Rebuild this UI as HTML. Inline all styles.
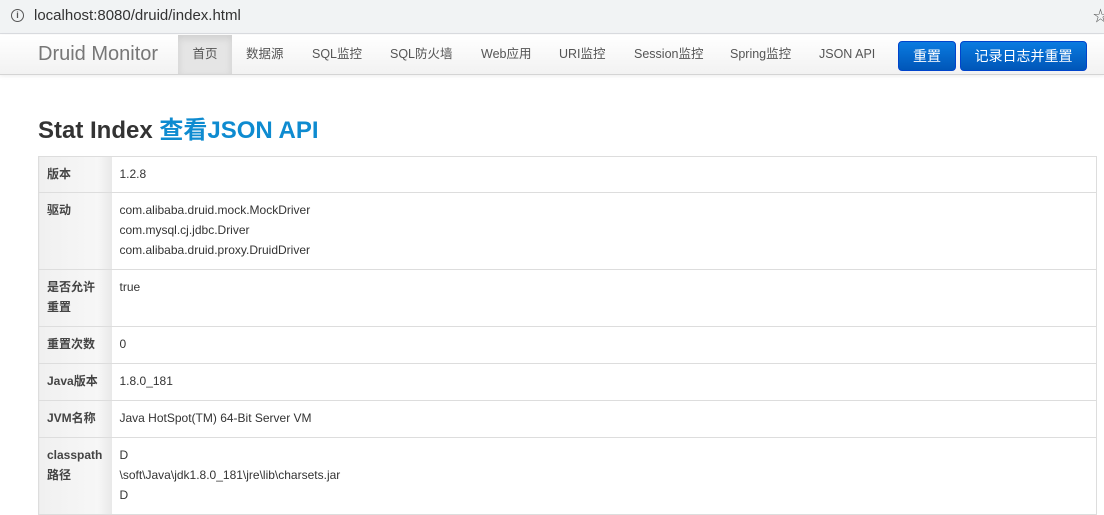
<!DOCTYPE html>
<html><head><meta charset="utf-8"><style>
*{margin:0;padding:0;box-sizing:border-box}
body{width:1104px;height:497px;overflow:hidden;background:#fff;font-family:"Liberation Sans","Noto Sans CJK SC",sans-serif;font-size:12px;color:#333}
.addr{height:34px;background:#f1f3f4;border-bottom:1px solid #dadce0;position:relative}
.addr .i{position:absolute;left:11px;top:9px;width:13px;height:13px;border:1.3px solid #555;border-radius:50%;font-size:9px;line-height:11px;text-align:center;color:#555;font-weight:bold}
.addr .u{position:absolute;left:34px;top:7px;font-size:15px;color:#333}
.addr .s{position:absolute;left:1093px;top:5px;font-size:15px;color:#555}
.nav{position:absolute;top:35px;left:0;width:1104px;height:40px;background:linear-gradient(#fff,#f2f2f2);border-bottom:1px solid #d4d4d4;box-shadow:0 1px 4px rgba(0,0,0,.08)}
.brand{position:absolute;left:38px;top:8px;font-size:20px;color:#777}
.nav a{position:absolute;top:0;height:39px;line-height:39px;font-size:12.5px;color:#555}
.act{background:#e5e5e5;box-shadow:inset 0 3px 8px rgba(0,0,0,.1)}
.btn{position:absolute;top:6px;height:30px;line-height:29px;text-align:center;color:#fff;font-size:14px;background:linear-gradient(#0a7be0,#0056b8);border:1px solid #04c;border-radius:4px}
h1{position:absolute;left:38px;top:110px;font-size:24px;font-weight:bold;color:#333}
h1 span{color:#0e8bd0}
table{position:absolute;left:38px;top:156px;width:1059px;border-collapse:collapse;border:1px solid #ddd}
td{border-top:1px solid #ddd;padding:7px 8px 9px;vertical-align:top;line-height:20px;font-size:12px}
td.l{width:73px;background:linear-gradient(90deg,#f0f0f0,#f7f7f7 80%,#e8e8e8);font-weight:bold;color:#444}
</style></head><body>
<div class="addr"><div class="i">i</div><div class="u">localhost:8080/druid/index.html</div><div class="s">☆</div></div>
<div class="nav">
<div class="brand">Druid Monitor</div>
<a class="act" style="left:178px;width:54px;text-align:center">首页</a>
<a style="left:246px">数据源</a>
<a style="left:312px">SQL监控</a>
<a style="left:390px">SQL防火墙</a>
<a style="left:481px">Web应用</a>
<a style="left:559px">URI监控</a>
<a style="left:634px">Session监控</a>
<a style="left:730px">Spring监控</a>
<a style="left:819px">JSON API</a>
<div class="btn" style="left:898px;width:58px">重置</div>
<div class="btn" style="left:960px;width:127px">记录日志并重置</div>
</div>
<h1>Stat Index <span>查看JSON API</span></h1>
<table>
<tr><td class="l" style="padding-bottom:8px">版本</td><td style="padding-bottom:8px">1.2.8</td></tr>
<tr><td class="l">驱动</td><td>com.alibaba.druid.mock.MockDriver<br>com.mysql.cj.jdbc.Driver<br>com.alibaba.druid.proxy.DruidDriver</td></tr>
<tr><td class="l" style="height:57px">是否允许<br>重置</td><td>true</td></tr>
<tr><td class="l">重置次数</td><td>0</td></tr>
<tr><td class="l">Java版本</td><td>1.8.0_181</td></tr>
<tr><td class="l">JVM名称</td><td>Java HotSpot(TM) 64-Bit Server VM</td></tr>
<tr><td class="l">classpath<br>路径</td><td>D<br>\soft\Java\jdk1.8.0_181\jre\lib\charsets.jar<br>D</td></tr>
</table>
</body></html>
